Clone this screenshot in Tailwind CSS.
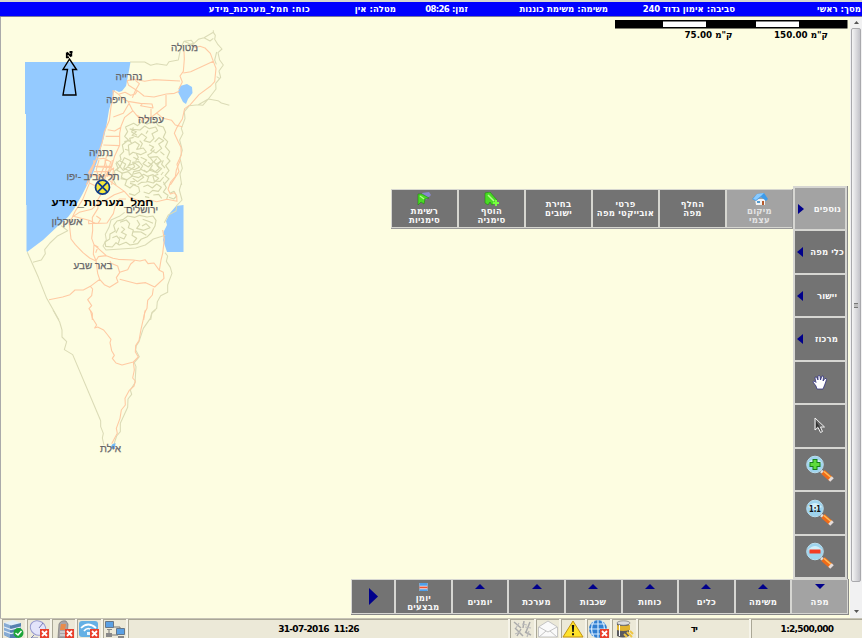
<!DOCTYPE html>
<html lang="he">
<head>
<meta charset="utf-8">
<title>מסך ראשי</title>
<script src="https://cdn.jsdelivr.net/npm/@tailwindcss/browser@4"></script>
</head>
<body class="w-[862px] h-[638px] overflow-hidden bg-[#fdfde1] font-['DejaVu_Sans','Liberation_Sans',sans-serif]">
<div class="flex flex-col w-[862px] h-[638px]">

<header dir="rtl" class="flex shrink-0 h-[17px] items-center pr-px bg-[#0000ff] border-t-2 border-b border-t-[#d8d8d0] border-b-[#7777a0] text-white font-bold text-[8.5px] leading-[14px] whitespace-nowrap tracking-[0.05px]">
  <div class="w-[126px]">מסך: ראשי</div>
  <div class="w-[127px]">סביבה: אימון גדוד <span class="tracking-[-0.2px]">240</span></div>
  <div class="w-[140px]">משימה: משימת כוננות</div>
  <div class="w-[72px]">זמן: <span class="tracking-[-0.7px]">08:26</span></div>
  <div class="w-[86px]">מטלה: אין</div>
  <div class="tracking-[0.3px]">כוח: חמל_מערכות_מידע</div>
</header>

<main class="relative flex h-[601px] border-l border-[#aaa]">
  <svg class="absolute left-[-1px] top-0" width="851" height="601" viewBox="0 17 851 601">
    <path fill="#94caff" d="M25 62H130.500L128 76L126 86L122 91L119 92L115 90L113 94L111 103L109 110L106 128L104 137L98 159L92 176L87 185L82 195L74 209L68 217L59 225L43 240L27 252L26.500 251V205H26V114H25Z"/>
    <path fill="#94caff" d="M183.500 205V252H167L163 240L164 236L163.500 232L167 225L166 221L170 213L176 206ZM178 92L180 86L187 84L192 87L192.500 93L188 99L186 104L183 102Z"/>
    <g fill="none" stroke="#dbdbb6" stroke-width="3.200" stroke-linejoin="round">
      <g transform="translate(20 25) scale(.33333)">
        <path d="M330 111L374 111L392 121L410 116L440 121L447 110L475 105L482 70L492 49L506 55L516 61L535 43L552 38L580 22L586 31L584 43L594 59L606 72L594 83L599 105L610 120L597 138L602 157L587 175L588 192L565 222L535 239L508 242L493 260L495 281L484 310L489 325L479 345L487 376L480 399L487 430L480 447L485 480M535 239L548 241L565 222L594 227L604 234L628 241M492 49L514 46L521 55L500 61M552 38L570 48L580 40M590 81L584 105L589 118M590 155L598 160M580 22V16"/>
      </g>
      <g transform="translate(20 160) scale(.33333)">
        <path d="M484 70L478 90L486 120L470 137L468 153L445 165L433 188M22 277L55 352L80 415L117 480M39 307L64 300L76 281L74 269L90 249L111 229L143 212L123 197M436 226L400 237L376 255L347 264L258 270L249 258L259 240L256 223L267 202L273 180L298 169L314 157M435 278L443 288L439 304L451 322L456 340L448 361L443 375L443 397L422 407L412 425L410 445L396 457L392 480"/>
      </g>
      <g transform="translate(20 310) scale(.33333)">
        <path d="M99 0L119 36L126 60L126 81L140 95L133 119L158 134L236 318L242 332L242 350L250 370L247 384L252 405M406 0L395 10L391 25L370 55L357 95L349 107L347 120L358 140L343 158L348 170L345 218L331 240L335 253L324 267L323 292L301 340L301 365L290 378L281 405"/>
      </g>
    </g>
    <g fill="none" stroke="#d6d7ae" stroke-width="3.400" stroke-linejoin="round">
      <g transform="translate(20 25) scale(.33333)">
        <path d="M316 306L341 295L353 302L365 290L381 297L405 288L415 302L430 306L437 322L430 337L443 350L436 365L449 380L441 398L450 408L437 422L447 437L435 452L447 462L431 480M316 306L323 320L314 334L325 345L307 360L311 380L300 391L303 404L288 415L294 430L283 438L286 452L279 463L288 480M330 312L349 320L336 331L354 337L365 326L380 337L372 347L390 352L402 340L396 326L413 317L407 306L388 311L374 303L360 315ZM325 361L345 350L358 359L350 373L370 369L379 381L362 389L339 382L328 390ZM387 359L401 366L392 376L408 384L425 370L416 357L431 347L417 338L404 351M313 398L332 407L328 421L346 415L359 426L343 434L323 426L310 436L300 425ZM362 397L380 405L369 416L385 426L400 411L390 397L412 395L423 407L411 422L425 431L411 444L394 432L380 442L361 432M304 445L324 440L337 453L321 464L302 461M341 447L359 442L371 457L353 470L338 460M382 454L399 449L416 460L400 474L381 469M330 475L348 480M384 317L378 326M340 397L357 405M421 380L433 390M423 450L430 441M340 307L335 321L351 331M359 347L367 356L361 368M313 350L327 347L337 356M315 373L325 376M341 337L329 340L332 350M395 383L383 390L389 399M410 401L402 410L408 418M430 406L425 418L435 429M349 386L355 397L347 407M404 374L391 386"/>
      </g>
      <g transform="translate(20 160) scale(.33333)">
        <path d="M289 5L300 19L290 30L307 40L304 52L320 61L315 75L330 84L341 74L356 81L359 95L344 106L327 101M300 3L317 12L311 25L327 32L344 20L338 7L357 5L368 18L359 31L341 35L337 48L355 53L371 43L386 51L380 66L365 67L353 74M384 7L397 16L388 30L405 36L418 25L409 11L425 4M415 43L399 49L403 63L420 64L431 51M370 80L383 75L397 84L410 72L424 82L415 94L398 91L387 101L371 96M430 65L439 83L430 96L444 106L440 117M323 20L330 10M345 64L330 66M371 30L381 37M400 105L416 103L425 115M375 110L388 113M450 100L462 94L470 108L461 117L447 112M323 168L345 172L359 166L381 171L399 168L408 181L405 198L393 219L382 230L363 238L353 251L330 255L318 247L298 255L288 248L277 261L257 259L255 246L269 237L270 222L286 213L281 196L291 183L309 179ZM300 187L319 180L329 191L325 203L340 210L336 226L350 235L340 248M277 233L290 228L299 238L295 250M304 200L314 208L304 217L319 224L312 237L298 231M351 180L359 193L350 205L371 211L390 203L378 191L366 198M340 215L363 216L379 226M368 178L385 184L399 190M296 203L288 219"/>
      </g>
    </g>
    <g fill="none" stroke="#ffcaa3" stroke-width="3.300" stroke-linejoin="round">
      <g transform="translate(20 25) scale(.33333)">
        <path d="M492 78L493 102L490 139L480 153L487 171L476 193M490 144L512 140L580 109L571 85L555 69L540 64L523 68M580 109L588 130L584 170L572 183L537 209L511 239L494 251L487 282L471 307L463 325L474 349L483 367L484 390L471 418L477 440L458 469L451 480M321 167L345 163L374 169L400 164L480 168M321 167L326 181L352 197L372 213L402 216L439 207L463 205L478 199M346 166L358 176L347 195L337 218M279 196L296 208L315 202L332 211L346 207L352 197M279 196L280 215L273 245L268 286L253 321L246 354L234 388L222 420L208 457L199 480M296 208L309 222L324 229L337 255L350 271L373 282L393 277L410 264L438 242L438 210M324 229L361 235L396 237L399 249L362 242L368 235M393 251L393 277M326 237L310 265L280 276M338 258L314 277L303 304L299 325L299 361L284 393L276 421L263 440L247 480M350 271L368 290M410 264L429 280L455 286L466 300L487 305M263 314L284 318L303 307M257 334H300M250 360L298 362M229 402L251 400L272 410L268 428L228 425M260 390L253 423L241 451L237 480M222 440H265L281 429L275 480"/>
      </g>
      <g transform="translate(20 160) scale(.33333)">
        <path d="M205 40L225 3M222 0L220 17L207 42L208 70L188 119L166 153L156 174L147 184L153 237L166 254L189 278L209 294L226 302M237 0L229 28L237 55L226 80M255 0L260 22L250 60M277 0L273 30L261 51M225 19H277M211 47H275M210 70L225 77L246 99L233 120L234 145L217 172L218 211L215 235L222 254L220 283L228 302L233 340L239 358L253 374L269 382L294 366L289 353L299 338L293 318L273 310L270 303M270 63L292 79L313 94L329 112L352 121L368 127L390 120L410 125L441 118L471 124L470 108L463 98L451 102L444 88L452 66L466 50L469 30L481 0M318 117L298 117L286 137L280 161L261 189L226 190L207 181L160 169L178 157L215 148L234 130L259 119L283 104L313 94M206 181V191L235 189L242 177L229 168M222 254L234 261L227 278M222 254L259 287L279 295L295 298L340 300L360 303L375 299L384 311L402 309L418 331L430 337L432 355L404 381L377 368L351 371L299 358M228 302L235 290L259 287M299 337L323 329L332 312L344 302M418 331L423 300L428 280L433 238L428 210M400 385L397 405L383 421L381 445L374 458L371 480M239 358L211 379L190 390H165L150 404L128 411L87 419M211 379L218 387L215 407L203 419L215 437L207 446L217 460V480"/>
      </g>
      <g transform="translate(20 310) scale(.33333)">
        <path d="M211 0L217 24L230 45L224 54L233 51L251 60L263 75L273 88L270 98L275 122L283 136L277 145L288 159L306 165L340 156L355 141L346 126L347 107L357 92L363 58L370 27L376 0M340 156L343 180L338 204L346 213L342 228L328 241L315 265L316 285L304 300L300 325L289 355L292 370L283 386L275 401"/>
      </g>
    </g>
    <path fill="#70b8f8" d="M110.500 448.500L112 444.500L115.500 443L115 449Z"/>
    <g fill="none" stroke="#000" stroke-width="1.400">
      <path d="M69.500 59L63 69.500H67.500L63 95H76L72.500 69.500H76.500Z"/>
      <path stroke-width="1.800" d="M66.800 58V52.500M71.300 56.500V51.500M66.800 52.500L71.300 56.500M66 57.300H69M69.500 52H72.500"/>
    </g>
    <circle cx="102.500" cy="187.200" r="7" fill="#f6e83a" stroke="#103c88" stroke-width="1.700"/>
    <path stroke="#103c88" stroke-width="1.700" d="M97.500 182.200L107.500 192.200M107.500 182.200L97.500 192.200"/>
    <g direction="rtl" text-anchor="middle" font-family="Liberation Sans, DejaVu Sans, sans-serif" font-size="10.500" fill="#66666a" stroke="#66666a" stroke-width=".25">
      <text x="184.500" y="51" textLength="27" lengthAdjust="spacingAndGlyphs">מטולה</text>
      <text x="129" y="80" textLength="27" lengthAdjust="spacingAndGlyphs">נהרייה</text>
      <text x="116.300" y="103" textLength="20" lengthAdjust="spacingAndGlyphs">חיפה</text>
      <text x="151" y="123" textLength="26" lengthAdjust="spacingAndGlyphs">עפולה</text>
      <text x="101" y="156" textLength="24" lengthAdjust="spacingAndGlyphs">נתניה</text>
      <text x="93" y="180" textLength="53" lengthAdjust="spacingAndGlyphs">תל אביב -יפו</text>
      <text x="142" y="213" textLength="32" lengthAdjust="spacingAndGlyphs">ירושלים</text>
      <text x="67" y="225" textLength="31" lengthAdjust="spacingAndGlyphs">אשקלון</text>
      <text x="93" y="269" textLength="39" lengthAdjust="spacingAndGlyphs">באר שבע</text>
      <text x="110.500" y="452" textLength="21" lengthAdjust="spacingAndGlyphs">אילת</text>
      <text x="102.500" y="206" fill="#000" stroke="none" font-weight="bold" textLength="102" lengthAdjust="spacingAndGlyphs">חמל_מערכות_מידע</text>
    </g>
    <g>
      <rect x="615" y="20" width="232.500" height="8.500" fill="#000"/>
      <path fill="#fff" d="M663 21.500H706V27H663ZM756 21.500H799V27H756Z"/>
      <g direction="rtl" text-anchor="middle" font-family="DejaVu Sans, sans-serif" font-weight="bold" font-size="9">
        <text x="708.500" y="37.500" textLength="48" lengthAdjust="spacingAndGlyphs">ק"מ 75.00</text>
        <text x="801" y="37.500" textLength="54" lengthAdjust="spacingAndGlyphs">ק"מ 150.00</text>
      </g>
    </g>
  </svg>

  <!-- map sub-menu -->
  <nav dir="rtl" class="absolute left-[390px] top-[172px] w-[402px] h-[40px] grid grid-cols-[65px_65px_65px_65px_65px_minmax(0,1fr)] gap-[2px] py-px pl-px bg-[#d6d6d0] border-b border-r border-[#999] text-[#f8f8f8] font-bold text-[8.500px] leading-[9px] text-center tracking-[0.25px] whitespace-nowrap">
    <div class="bg-[#a3a3a3] flex flex-col items-center justify-center text-[#e4e4e4]">
      <svg width="16" height="13" viewBox="0 0 16 13"><path fill="#f3f3f3" d="M3 6H13V12H4Z"/><path fill="#3d9bea" d="M0 6L5 1L12 0L16 6L14 8L9 4L4 8Z"/><path fill="#8acbff" d="M5 1L12 0L9 3L4 7L1 6Z"/><path fill="#b65a2c" d="M10 8H12V12H10Z"/><path fill="#559cd0" d="M5 8H8V10H5Z"/></svg>
      <span class="mt-px">מיקום<br>עצמי</span>
    </div>
    <div class="bg-[#737373] flex items-center justify-center">החלף<br>מפה</div>
    <div class="bg-[#737373] flex items-center justify-center">פרטי<br>אובייקטי מפה</div>
    <div class="bg-[#737373] flex items-center justify-center">בחירת<br>ישובים</div>
    <div class="bg-[#737373] flex flex-col items-center justify-center">
      <svg width="15" height="14" viewBox="0 0 15 14"><path fill="#49db25" stroke="#21890f" stroke-width=".6" d="M1 1L6 0L13 8L12 10L8 13L6 10L4 13L1 11Z"/><path stroke="#b5ff8a" stroke-width="1.500" d="M4 3L10 9"/><path stroke="#77ff40" stroke-width="2" d="M12 8V14M9 11H15"/></svg>
      <span class="mt-px">הוסף<br>סימניה</span>
    </div>
    <div class="bg-[#737373] flex flex-col items-center justify-center">
      <svg width="15" height="14" viewBox="0 0 15 14"><path fill="#8a88ce" d="M5 1L12 0L14 3L9 8L5 5Z"/><path fill="#49db25" stroke="#21890f" stroke-width=".6" d="M1 2L5 2L12 6L8 7L7 12L4 10L1 13Z"/><path stroke="#b5ff8a" stroke-width="1.200" d="M3 4L7 7"/></svg>
      <span class="mt-px">רשימת<br>סימניות</span>
    </div>
  </nav>

  <!-- vertical tools -->
  <nav class="absolute left-[792px] top-[169px] w-[55px] h-[394px] grid grid-rows-9 gap-[2px] p-[2px] bg-[#d6d6d2] border-r border-b border-[#888] text-[#f8f8f8] font-bold text-[8.500px] leading-[10px] tracking-[0.1px] whitespace-nowrap">
    <div class="bg-[#a3a3a3] flex items-center justify-between pl-[3px] pr-[4px]"><svg width="6" height="10"><path fill="#00008b" d="M0 0L6 5L0 10Z"/></svg><span>נוספים</span></div>
    <div class="bg-[#737373] flex items-center justify-between pl-[2px] pr-px"><svg width="6" height="10"><path fill="#00008b" d="M6 0L0 5L6 10Z"/></svg><span>כלי מפה</span></div>
    <div class="bg-[#737373] flex items-center justify-between pl-[2px] pr-[8px]"><svg width="6" height="10"><path fill="#00008b" d="M6 0L0 5L6 10Z"/></svg><span>יישור</span></div>
    <div class="bg-[#737373] flex items-center justify-between pl-[2px] pr-[7px]"><svg width="6" height="10"><path fill="#00008b" d="M6 0L0 5L6 10Z"/></svg><span>מרכוז</span></div>
    <div class="bg-[#737373] flex items-center justify-center"><svg width="16" height="16" viewBox="0 0 16 16"><path fill="#fff" stroke="#22227a" stroke-width=".7" d="M5 15L4 12L1 8Q1 6.500 3 7.500L4 8.500L3 4Q3 2.500 4.500 3L6 6L6 2Q7 .500 8 2L8.500 6L10 2Q11.500 1.500 11.500 3L11 7L13 4.500Q14.500 4 14.500 5.500L13 10L11 15Z"/></svg></div>
    <div class="bg-[#737373] flex items-center justify-center"><svg width="12" height="17" viewBox="0 0 12 17"><path fill="#666" stroke="#f4f4f4" d="M1 1V13L4 10.500L6.500 15.500L8.500 14.500L6.500 10H10.500Z"/><path fill="#333" d="M2 4V11L4 9L7 14L5 9Z"/></svg></div>
    <div class="bg-[#737373] flex items-center justify-center"><svg width="30" height="28" viewBox="0 0 30 28"><path stroke="#ddd" stroke-width="3" d="M16 16L20 19"/><path stroke="#f06b18" stroke-width="5" d="M18 17L26 24"/><path stroke="#ffc05a" stroke-width="1.500" d="M19 16.500L26 22.500"/><path stroke="#e5dcda" stroke-width="5" d="M25 23L27 25"/><circle cx="10" cy="9.500" r="8.300" fill="#9ed4ee" stroke="#b9dff0"/><path fill="#d2effa" d="M3 8Q10 0 17 8L10 11Z"/><path stroke="#18801a" stroke-width="5" d="M10 4V15M4.500 9.500H15.500"/><path stroke="#5edb3c" stroke-width="3" d="M10 5V14M5.500 9.500H14.500"/></svg></div>
    <div class="bg-[#737373] flex items-center justify-center"><svg width="30" height="28" viewBox="0 0 30 28"><path stroke="#ddd" stroke-width="3" d="M16 16L20 19"/><path stroke="#f06b18" stroke-width="5" d="M18 17L26 24"/><path stroke="#ffc05a" stroke-width="1.500" d="M19 16.500L26 22.500"/><path stroke="#e5dcda" stroke-width="5" d="M25 23L27 25"/><circle cx="10" cy="9.500" r="8.300" fill="#9ed4ee" stroke="#b9dff0"/><path fill="#d2effa" d="M3 8Q10 0 17 8L10 11Z"/><text x="10" y="12.500" text-anchor="middle" font-size="8" letter-spacing="0" textLength="12" lengthAdjust="spacingAndGlyphs" fill="#111">1:1</text></svg></div>
    <div class="bg-[#737373] flex items-center justify-center"><svg width="30" height="28" viewBox="0 0 30 28"><path stroke="#ddd" stroke-width="3" d="M16 16L20 19"/><path stroke="#f06b18" stroke-width="5" d="M18 17L26 24"/><path stroke="#ffc05a" stroke-width="1.500" d="M19 16.500L26 22.500"/><path stroke="#e5dcda" stroke-width="5" d="M25 23L27 25"/><circle cx="10" cy="9.500" r="8.300" fill="#9ed4ee" stroke="#b9dff0"/><path fill="#d2effa" d="M3 8Q10 0 17 8L10 11Z"/><path stroke="#f43b22" stroke-width="4" d="M4.500 9.500H15.500"/></svg></div>
  </nav>

  <!-- main menu -->
  <nav class="absolute left-[350px] top-[562px] w-[498px] h-[36px] grid grid-cols-[42px_repeat(8,minmax(0,1fr))] gap-[2px] p-px bg-[#d6d6d2] border-b border-r border-[#888] text-[#f8f8f8] font-bold text-[8.500px] leading-[9px] text-center tracking-[0.2px] whitespace-nowrap">
    <div class="bg-[#737373] flex items-center justify-center"><svg width="9" height="17"><path fill="#00008b" d="M0 0L9 8.500L0 17Z"/></svg></div>
    <div dir="rtl" class="bg-[#737373] flex flex-col items-center pt-[3px]"><svg width="9" height="8" viewBox="0 0 9 9" class="shrink-0"><path fill="#e3efff" d="M0 0H9V9H0Z"/><path fill="#4f9fe9" d="M0 0H9V3H0ZM0 7H9V9H0Z"/><path fill="#f05230" d="M0 4H9V6H0Z"/></svg><span class="mt-[3px]">יומן<br>מבצעים</span></div>
    <div class="bg-[#737373] flex flex-col items-center pt-[4px]"><svg width="10" height="5"><path fill="#00008b" d="M0 5L5 0L10 5Z"/></svg><span class="mt-[9px]">יומנים</span></div>
    <div class="bg-[#737373] flex flex-col items-center pt-[4px]"><svg width="10" height="5"><path fill="#00008b" d="M0 5L5 0L10 5Z"/></svg><span class="mt-[9px]">מערכת</span></div>
    <div class="bg-[#737373] flex flex-col items-center pt-[4px]"><svg width="10" height="5"><path fill="#00008b" d="M0 5L5 0L10 5Z"/></svg><span class="mt-[9px]">שכבות</span></div>
    <div class="bg-[#737373] flex flex-col items-center pt-[4px]"><svg width="10" height="5"><path fill="#00008b" d="M0 5L5 0L10 5Z"/></svg><span class="mt-[9px]">כוחות</span></div>
    <div class="bg-[#737373] flex flex-col items-center pt-[4px]"><svg width="10" height="5"><path fill="#00008b" d="M0 5L5 0L10 5Z"/></svg><span class="mt-[9px]">כלים</span></div>
    <div class="bg-[#737373] flex flex-col items-center pt-[4px]"><svg width="10" height="5"><path fill="#00008b" d="M0 5L5 0L10 5Z"/></svg><span class="mt-[9px]">משימה</span></div>
    <div class="bg-[#a3a3a3] flex flex-col items-center pt-[4px]"><svg width="10" height="5"><path fill="#00008b" d="M0 0L5 5L10 0Z"/></svg><span class="mt-[9px]">מפה</span></div>
  </nav>

  <div class="ml-auto w-[12px] h-full flex flex-col items-center bg-[#f1f1f2]">
    <svg class="mt-[4px]" width="5" height="3"><path fill="#555" d="M0 3L2.500 0L5 3Z"/></svg>
    <div class="mt-[4px] w-[10px] h-[554px] rounded-[2px] border border-[#a9a9ad] bg-linear-to-r from-[#f5f5f5] via-[#dcdcdf] to-[#c2c2c8] flex items-center justify-center">
      <div class="w-[4px] h-[5px] border-y border-[#777] bg-[#bbb]"></div>
    </div>
    <svg class="mt-auto mb-[5px]" width="5" height="3"><path fill="#555" d="M0 0L2.500 3L5 0Z"/></svg>
  </div>
</main>

<footer class="flex h-[20px] gap-[2px] pl-[2px] bg-[#f6f4e9] border-t border-[#c5c2b5] text-black font-bold text-[9px] leading-[19px] tracking-[-0.7px] whitespace-nowrap">
  <div class="w-[23px] bg-[#ece9d8] border-l border-t border-[#aaa796]"><svg width="22" height="18" viewBox="0 0 22 18"><path fill="#5580b0" d="M1 3V15L7 18H14L18 15V3Z"/><path fill="#86abd4" d="M1 3V15L7 18V5Z"/><path fill="#e0edf8" d="M1 3L10 0L18 3L8 5.500Z"/><path stroke="#e4eef8" stroke-width="1.200" fill="none" d="M1 7L8 9.500L18 7M1 11L8 13.500L18 11"/><circle cx="15.500" cy="13" r="5" fill="#1ca53a"/><path fill="none" stroke="#fff" stroke-width="1.500" d="M12.500 13L15 15L18.500 11"/></svg></div>
  <div class="w-[23px] bg-[#ece9d8] border-l border-t border-[#aaa796]"><svg width="22" height="18" viewBox="0 0 22 18"><ellipse cx="10" cy="8" rx="8" ry="7" fill="#e3e4fa" stroke="#989bd0" transform="rotate(35 10 8)"/><path fill="none" stroke="#777bb2" d="M11 8L15 3M6 15L3 18H10"/><path fill="#e9402b" d="M12 9H21V18H12Z"/><path stroke="#fff" stroke-width="1.800" d="M14 11L19 16M19 11L14 16"/></svg></div>
  <div class="w-[23px] bg-[#ece9d8] border-l border-t border-[#aaa796]"><svg width="22" height="18" viewBox="0 0 22 18"><path fill="#a8a3a6" stroke="#777" stroke-width=".7" d="M6 4Q8 0 13 1L15 4L14 18H5Z"/><path fill="#e98b4a" d="M8 4H13L12 10H7Z"/><path stroke="#eee" d="M7 12H12M7 15H12"/><path fill="#e9402b" d="M12 9H21V18H12Z"/><path stroke="#fff" stroke-width="1.800" d="M14 11L19 16M19 11L14 16"/></svg></div>
  <div class="w-[24px] bg-[#ece9d8] border-l border-t border-[#aaa796]"><svg width="22" height="18" viewBox="0 0 22 18"><rect x="1" y="1" width="19" height="16" rx="3" fill="#64b0e4"/><path fill="none" stroke="#fff" stroke-width="1.700" d="M3 8Q10 1 18 8M6 11Q10 6 15 11"/><path fill="#e8f6ff" d="M9 12H12V15H9Z"/><path fill="#e9402b" d="M12 9H21V18H12Z"/><path stroke="#fff" stroke-width="1.800" d="M14 11L19 16M19 11L14 16"/></svg></div>
  <div class="w-[23px] bg-[#ece9d8] border-l border-t border-[#aaa796]"><svg width="22" height="18" viewBox="0 0 22 18"><path fill="none" stroke="#777" d="M5 9V15H14M8 7H16V9"/><path fill="#5aa0e4" stroke="#667788" d="M1.500 1.500H9.500V7.500H1.500ZM12.500 8.500H20.500V14.500H12.500Z"/><path fill="#888" d="M3 9H8V10H3ZM14 16H20V18H14ZM2 13H8V17H2Z"/></svg></div>
  <div class="w-[380px] bg-[#ece9d8] border-l border-t border-[#aaa796] text-center whitespace-pre">31-07-2016  11:26</div>
  <div class="w-[24px] bg-[#ece9d8] border-l border-t border-[#aaa796]"><svg width="22" height="18" viewBox="0 0 22 18"><path fill="none" stroke="#aaa" stroke-width="1.500" d="M3 2L10 8M13 1L12 8M19 2L15 12M4 8L12 16M10 9L6 16M14 12L20 15"/><path fill="none" stroke="#bbb" stroke-width="1.200" d="M8 3L5 8M16 5L11 4M20 8L14 7M4 14L9 12M16 17L18 11"/></svg></div>
  <div class="w-[23px] bg-[#ece9d8] border-l border-t border-[#aaa796]"><svg width="22" height="18" viewBox="0 0 22 18"><path fill="#fafafa" stroke="#c4c4c4" d="M1.500 7L11 1L20.500 7V17H1.500Z"/><path fill="none" stroke="#c4c4c4" d="M2 7L11 12L20 7M2 17L9 11M20 17L13 11"/></svg></div>
  <div class="w-[24px] bg-[#ece9d8] border-l border-t border-[#aaa796]"><svg width="22" height="18" viewBox="0 0 22 18"><path fill="#ffe22b" stroke="#c39312" stroke-linejoin="round" d="M11 1L21 17H1Z"/><path fill="#111" d="M9.800 5H12.200L11.700 12H10.300ZM10 13.200H12V15.200H10Z"/></svg></div>
  <div class="w-[23px] bg-[#ece9d8] border-l border-t border-[#aaa796]"><svg width="22" height="18" viewBox="0 0 22 18"><circle cx="10" cy="9" r="9" fill="#317fd1"/><path fill="none" stroke="#d5ebff" stroke-width="1.200" d="M1 9H19M3 4H17M3 14H17M10 0V18M6 1Q1 9 6 17M14 1Q19 9 14 17"/><path fill="#e9402b" d="M12 9H21V18H12Z"/><path stroke="#fff" stroke-width="1.800" d="M14 11L19 16M19 11L14 16"/></svg></div>
  <div class="w-[24px] bg-[#ece9d8] border-l border-t border-[#aaa796]"><svg width="22" height="18" viewBox="0 0 22 18"><path fill="#5b5b60" d="M4 3V16Q10 19 16 16V3Z"/><path fill="#e2b42e" d="M4 5Q10 7 17 5V10Q10 12 4 10Z"/><ellipse cx="10.500" cy="3" rx="6.500" ry="2.200" fill="#ddd" stroke="#777" stroke-width=".7"/><path stroke="#fff" d="M6.500 5V16"/><path fill="none" stroke="#efc642" stroke-width="2" d="M11 14L14 17M14 12L19 17M17 11L20 14"/></svg></div>
  <div class="w-[111px] bg-[#ece9d8] border-l border-t border-[#aaa796] text-center">יד</div>
  <div class="flex-1 bg-[#ece9d8] border-l border-t border-[#aaa796] text-center">1:2,500,000</div>
</footer>
</div>
</body>
</html>
